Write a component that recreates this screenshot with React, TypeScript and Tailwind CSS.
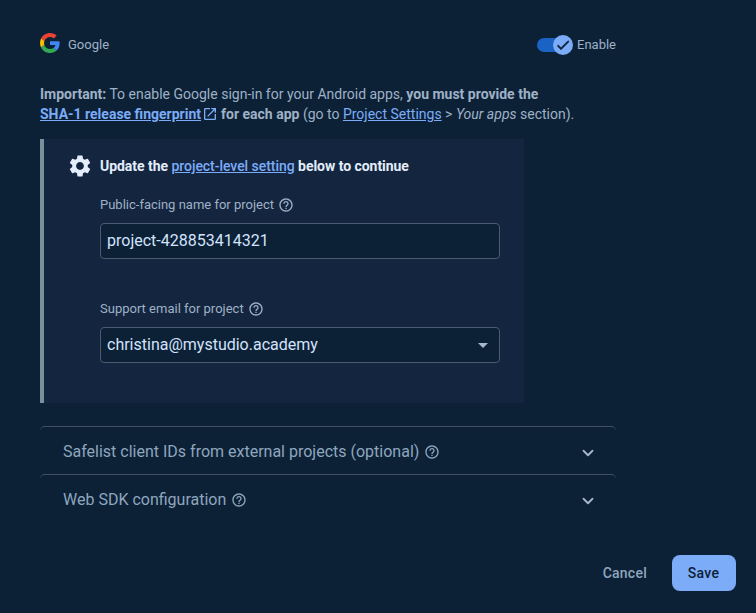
import { ChevronDown } from "lucide-react";

function HelpIcon() {
  return (
    <svg viewBox="0 0 24 24" className="w-4 h-4 shrink-0" fill="currentColor">
      <path d="M11 18h2v-2h-2v2zm1-16C6.48 2 2 6.48 2 12s4.48 10 10 10 10-4.48 10-10S17.52 2 12 2zm0 18c-4.41 0-8-3.59-8-8s3.59-8 8-8 8 3.59 8 8-3.59 8-8 8zm0-14c-2.21 0-4 1.79-4 4h2c0-1.1.9-2 2-2s2 .9 2 2c0 2-3 1.75-3 5h2c0-2.25 3-2.5 3-5 0-2.21-1.79-4-4-4z" />
    </svg>
  );
}

function GoogleLogo() {
  return (
    <svg viewBox="0 0 48 48" className="w-5 h-5 shrink-0 -mt-[2px]">
      <path fill="#EA4335" d="M24 9.5c3.54 0 6.71 1.22 9.21 3.6l6.85-6.85C35.9 2.38 30.47 0 24 0 14.62 0 6.51 5.38 2.56 13.22l7.98 6.19C12.43 13.72 17.74 9.5 24 9.5z" />
      <path fill="#4285F4" d="M46.98 24.55c0-1.57-.15-3.09-.38-4.55H24v9.02h12.94c-.58 2.96-2.26 5.48-4.78 7.18l7.73 6c4.51-4.18 7.09-10.36 7.09-17.65z" />
      <path fill="#FBBC05" d="M10.53 28.59c-.48-1.45-.76-2.99-.76-4.59s.27-3.14.76-4.59l-7.98-6.19C.92 16.46 0 20.12 0 24c0 3.88.92 7.54 2.56 10.78l7.97-6.19z" />
      <path fill="#34A853" d="M24 48c6.48 0 11.93-2.13 15.89-5.81l-7.73-6c-2.15 1.45-4.92 2.3-8.16 2.3-6.26 0-11.57-4.22-13.47-9.91l-7.98 6.19C6.51 42.62 14.62 48 24 48z" />
    </svg>
  );
}

function AccordionRow({ title }: { title: string }) {
  return (
    <div className="flex items-center h-12 pl-[23px] pr-[19px] pt-[2px] border-t border-[#3f4f66] rounded-t-[5px] text-[#8fa6bf]">
      <span className="text-base leading-6">{title}</span>
      <span className="ml-[5px]"><HelpIcon /></span>
      <ChevronDown className="ml-auto w-[18px] h-[18px] mt-[3px] text-[#a8b8cc]" strokeWidth={2.4} />
    </div>
  );
}

export default function App() {
  return (
    <div
      className="w-[756px] h-[613px] overflow-hidden bg-[#0c2136] text-[#9fb1c6] text-sm"
      style={{ fontFamily: "Roboto, sans-serif" }}
    >
      <div className="w-[576px] ml-10 pt-8">
        <div className="flex items-center justify-between h-6">
          <div className="flex items-center gap-2">
            <GoogleLogo />
            <span className="text-[13px] text-[#9fb1c6] pt-[2px]">Google</span>
          </div>
          <div className="flex items-center gap-1 text-[13px]">
            <div className="relative w-[36px] h-[14px] mr-[1px] mt-[1px]">
              <div className="absolute left-[1px] top-0 w-[26px] h-[14px] rounded-full bg-[#1a62c4]" />
              <div className="absolute right-[-1px] top-[-3px] w-5 h-5 rounded-full bg-[#7cacf8] flex items-center justify-center">
                <svg viewBox="0 0 24 24" className="w-4 h-4" fill="#0c2136" stroke="#0c2136" strokeWidth={1}>
                  <path d="M9 16.17 4.83 12l-1.42 1.41L9 19 21 7l-1.41-1.41z" />
                </svg>
              </div>
            </div>
            <span className="pt-[2px]">Enable</span>
          </div>
        </div>

        <p className="mt-[28px] leading-5 text-[14px] whitespace-nowrap">
          <b className="font-bold">Important:</b> To enable Google sign-in for your Android apps, <b className="font-bold">you must provide the</b>
          <br />
          <a className="text-[#7cacf8] underline font-bold">SHA-1 release fingerprint</a>
          <svg viewBox="0 0 24 24" className="inline w-4 h-4 ml-[1px] mb-[2px] text-[#7cacf8]" fill="currentColor">
            <path d="M19 19H5V5h7V3H5a2 2 0 0 0-2 2v14a2 2 0 0 0 2 2h14c1.1 0 2-.9 2-2v-7h-2v7zM14 3v2h3.59l-9.83 9.83 1.41 1.41L19 6.41V10h2V3h-7z" />
          </svg>
          <b className="font-bold ml-[3px]">for each app</b> (go to <a className="text-[#7cacf8] underline">Project Settings</a> &gt; <i>Your apps</i> section).
        </p>

        <div className="mt-[15px] w-[484px] h-[264px] bg-[#14263f] border-l-4 border-[#78909c] pl-[25px] pt-[16px]">
          <div className="flex items-center h-[22px]">
            <svg viewBox="0 0 24 24" className="w-[26px] h-[26px] -ml-[2px] shrink-0 text-[#e3edfb]" fill="currentColor">
              <path d="M19.14 12.94c.04-.3.06-.61.06-.94 0-.32-.02-.64-.07-.94l2.03-1.58a.49.49 0 0 0 .12-.61l-1.92-3.32a.488.488 0 0 0-.59-.22l-2.39.96c-.5-.38-1.03-.7-1.62-.94l-.36-2.54a.484.484 0 0 0-.48-.41h-3.84c-.24 0-.43.17-.47.41l-.36 2.54c-.59.24-1.13.57-1.62.94l-2.39-.96c-.22-.08-.47 0-.59.22L2.74 8.87c-.12.21-.08.47.12.61l2.03 1.58c-.05.3-.09.63-.09.94s.02.64.07.94l-2.03 1.58a.49.49 0 0 0-.12.61l1.92 3.32c.12.22.37.29.59.22l2.39-.96c.5.38 1.03.7 1.62.94l.36 2.54c.05.24.24.41.48.41h3.84c.24 0 .44-.17.47-.41l.36-2.54c.59-.24 1.13-.56 1.62-.94l2.39.96c.22.08.47 0 .59-.22l1.92-3.32c.12-.22.07-.47-.12-.61l-2.01-1.58zM12 15.6c-1.98 0-3.6-1.62-3.6-3.6s1.62-3.6 3.6-3.6 3.6 1.62 3.6 3.6-1.62 3.6-3.6 3.6z" />
            </svg>
            <span className="ml-[7px] font-bold text-[14px] tracking-[-0.04px] text-[#e3edfb] whitespace-nowrap">
              Update the <a className="text-[#7cacf8] underline font-medium">project-level setting</a> below to continue
            </span>
          </div>

          <div className="ml-[31px] w-[400px]">
            <div className="flex items-center gap-[4px] mt-[18px] h-5 text-[13px]">
              Public-facing name for project <HelpIcon />
            </div>
            <div className="mt-[8px] h-9 flex items-center px-[6px] bg-[#0c2136] border border-[#4a5a70] rounded text-base text-[#d3e3fd]">
              project-428853414321
            </div>

            <div className="flex items-center gap-[4px] mt-[40px] h-5 text-[13px]">
              Support email for project <HelpIcon />
            </div>
            <div className="mt-[8px] h-9 flex items-center px-[6px] bg-[#0c2136] border border-[#4a5a70] rounded text-base text-[#d3e3fd]">
              christina@mystudio.academy
              <span className="ml-auto mr-[5px] w-0 h-0 border-x-[5px] border-x-transparent border-t-[5px] border-t-[#a8b8cc]" />
            </div>
          </div>
        </div>

        <div className="mt-[23px]">
          <AccordionRow title="Safelist client IDs from external projects (optional)" />
          <AccordionRow title="Web SDK configuration" />
        </div>
      </div>

      <div className="flex items-center justify-end w-[736px] mt-[33px] gap-[25px]">
        <button className="text-sm font-medium tracking-[0.25px] text-[#8fa6bf]">Cancel</button>
        <button className="w-16 h-9 pr-[1px] rounded-lg bg-[#7cacf8] text-sm font-medium tracking-[0.25px] text-[#0c2136]">Save</button>
      </div>
    </div>
  );
}
